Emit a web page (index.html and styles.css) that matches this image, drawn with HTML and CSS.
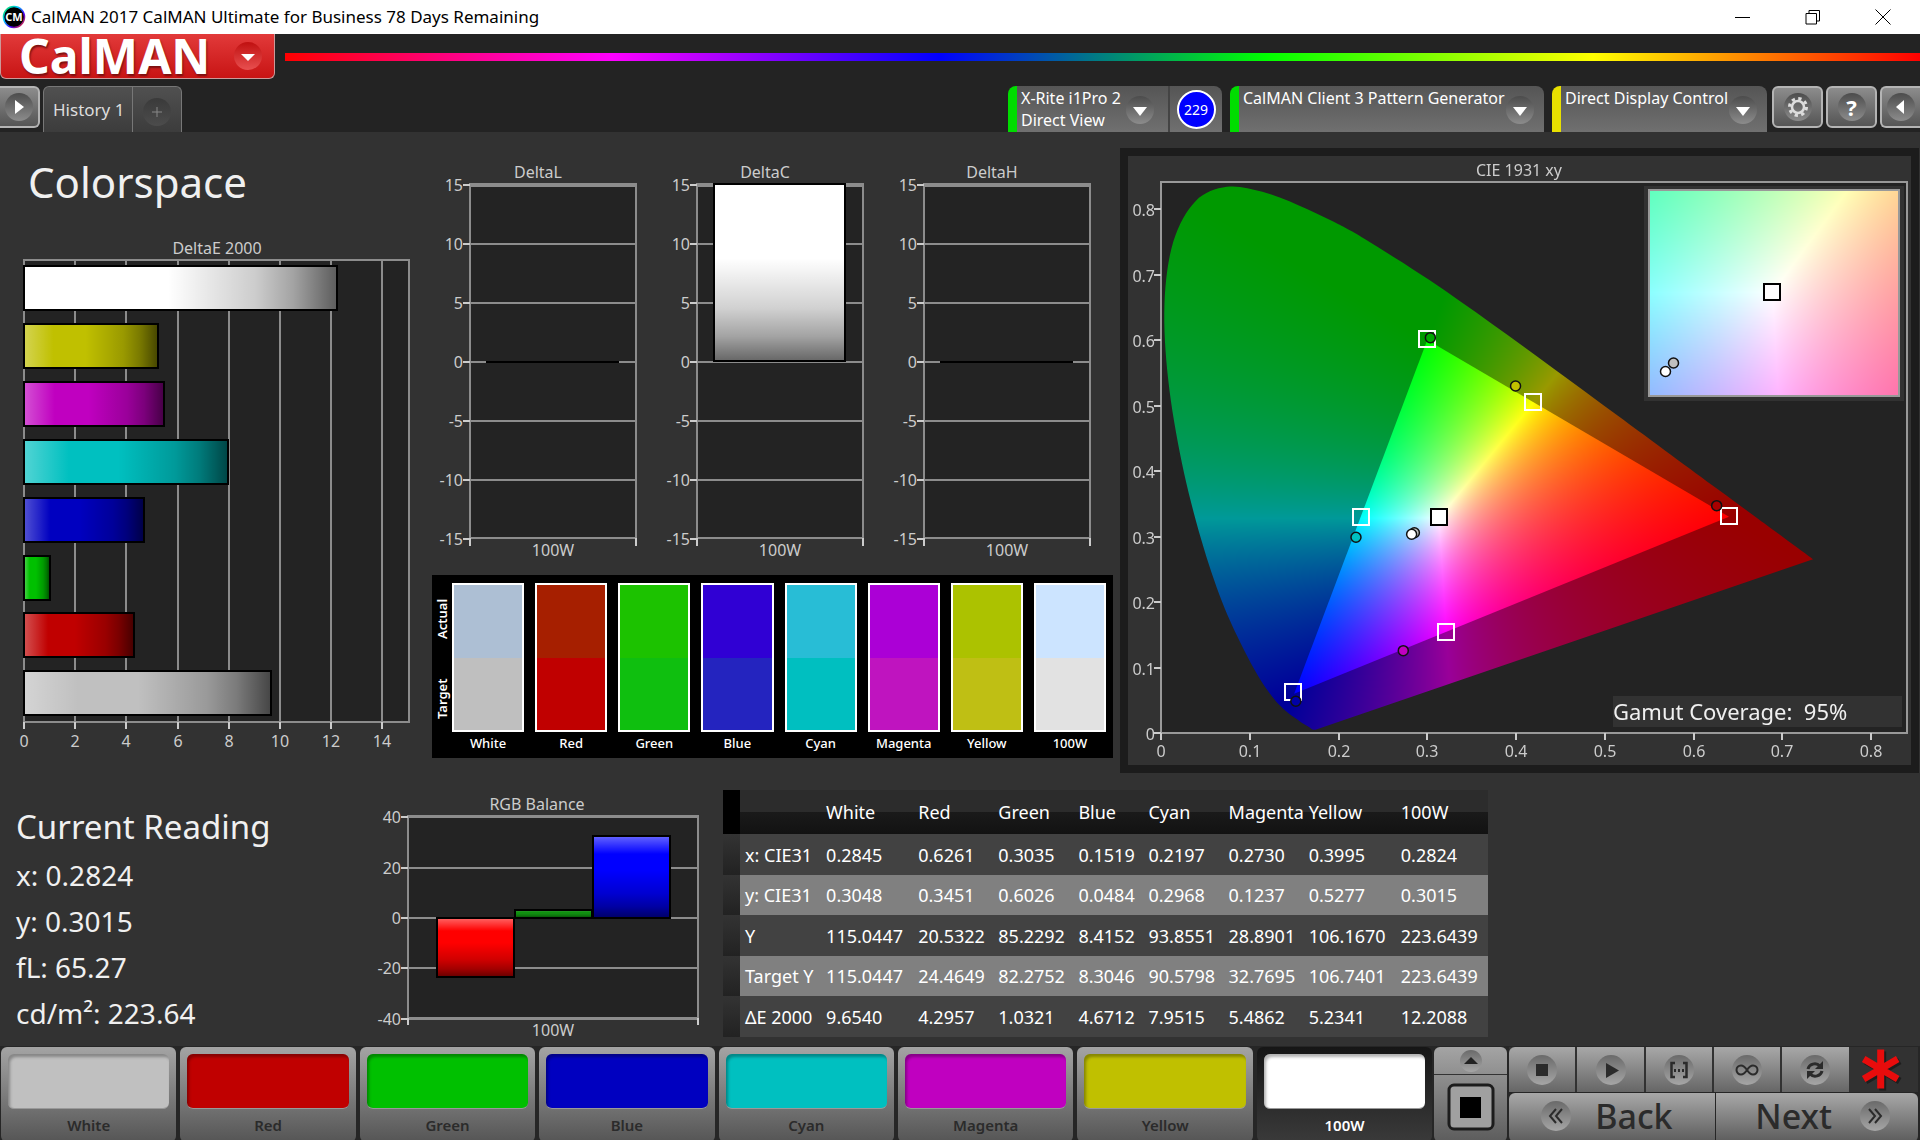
FILE: index.html
```html
<!DOCTYPE html>
<html lang="en">
<head>
<meta charset="utf-8">
<title>CalMAN 2017 CalMAN Ultimate for Business</title>
<link rel="stylesheet" href="styles.css">
</head>
<body>
<div class="titlebar">
  <svg class="app-icon" viewBox="0 0 24 24" width="24" height="24" aria-hidden="true">
    <defs><linearGradient id="rim" x1="0" y1="0" x2="1" y2="1"><stop offset="0" stop-color="#0d4"/><stop offset=".35" stop-color="#0cf"/><stop offset=".65" stop-color="#40f"/><stop offset="1" stop-color="#f30"/></linearGradient></defs>
    <circle cx="12" cy="12" r="10.5" fill="#000" stroke="url(#rim)" stroke-width="1.5"/>
    <text x="12" y="16" class="icon-text">CM</text>
  </svg>
  <span class="title">CalMAN 2017 CalMAN Ultimate for Business 78 Days Remaining</span>
  <button class="win" aria-label="Minimize"><svg viewBox="0 0 16 16" width="16" height="16"><path d="M0 8.5h15"/></svg></button>
  <button class="win" aria-label="Restore"><svg viewBox="0 0 16 16" width="16" height="16"><path d="M1 4.5h10.500v10.500H1zM4 4V1.500h10.500V12H12"/></svg></button>
  <button class="win" aria-label="Close"><svg viewBox="0 0 16 16" width="16" height="16"><path d="M.5.5l15 15M15.500.5l-15 15"/></svg></button>
</div>

<header class="header">
  <div class="brand-row">
    <button class="brand">CalMAN<span class="knob knob-red"><svg viewBox="0 0 28 28" width="28" height="28"><path d="M7 12h14l-7 7z" fill="#fff"/></svg></span></button>
    <div class="rainbow"></div>
  </div>
  <div class="tab-row">
    <button class="square edge-left" aria-label="Show workflow"><span class="knob"><svg viewBox="0 0 28 28" width="28" height="28"><path d="M10 7l9 7-9 7z" fill="#fff"/></svg></span></button>
    <div class="tabs">
      <button class="tab">History 1</button>
      <button class="tab tab-add" aria-label="Add tab"><span class="knob knob-dark"><svg viewBox="0 0 28 28" width="28" height="28"><path d="M14 9v10M9 14h10" stroke="#888" fill="none"/></svg></span></button>
    </div>
    <div class="spring"></div>
    <div class="device meter">
      <button class="device-main"><span>X-Rite i1Pro 2<br>Direct View</span><span class="knob"><svg viewBox="0 0 28 28" width="28" height="28"><path d="M7 11h14l-7 9z" fill="#fff"/></svg></span></button>
      <div class="badge-cell"><span class="badge">229</span></div>
    </div>
    <div class="device source">
      <button class="device-main"><span>CalMAN Client 3 Pattern Generator</span><span class="knob"><svg viewBox="0 0 28 28" width="28" height="28"><path d="M7 11h14l-7 9z" fill="#fff"/></svg></span></button>
    </div>
    <div class="device display">
      <button class="device-main"><span>Direct Display Control</span><span class="knob"><svg viewBox="0 0 28 28" width="28" height="28"><path d="M7 11h14l-7 9z" fill="#fff"/></svg></span></button>
    </div>
    <button class="square" aria-label="Settings"><span class="knob"><svg viewBox="0 0 28 28" width="28" height="28"><circle cx="14" cy="14" r="6" fill="none" stroke="#ddd" stroke-width="2.500"/><circle cx="14" cy="14" r="8.500" fill="none" stroke="#ddd" stroke-width="3" stroke-dasharray="3.300 3.376"/></svg></span></button>
    <button class="square" aria-label="Help"><span class="knob knob-help">?</span></button>
    <button class="square edge-right" aria-label="Show panel"><span class="knob"><svg viewBox="0 0 28 28" width="28" height="28"><path d="M17 7l-8 7 8 7z" fill="#fff"/></svg></span></button>
  </div>
</header>

<main class="main">
  <div class="top">
    <section class="de">
      <h1>Colorspace</h1>
      <svg id="deltaE" class="chart" viewBox="0 232 432 526"></svg>
    </section>
    <section class="middle">
      <div class="deltas">
        <svg id="deltaL" class="chart" viewBox="432 158 227 404"></svg>
        <svg id="deltaC" class="chart" viewBox="432 158 227 404"></svg>
        <svg id="deltaH" class="chart" viewBox="432 158 227 404"></svg>
      </div>
      <div class="compare">
        <div class="sides"><span>Actual</span><span>Target</span></div>
        <div class="swatches" id="swatches"></div>
      </div>
    </section>
    <section class="cie">
      <canvas id="gamut" width="783" height="609"></canvas>
      <svg id="cieAxes" class="overlay" viewBox="1128 156 783 609"></svg>
    </section>
  </div>
  <div class="bottom">
    <section class="reading">
      <h2>Current Reading</h2>
      <p>x: 0.2824</p>
      <p>y: 0.3015</p>
      <p>fL: 65.27</p>
      <p>cd/m²: 223.64</p>
    </section>
    <section class="balance"><svg id="rgb" class="chart" viewBox="370 785 353 256"></svg></section>
    <section class="data">
      <table>
        <colgroup><col class="c-grip"><col class="c-label"><col class="c-wide"><col class="c-mid"><col class="c-mid"><col class="c-thin"><col class="c-mid"><col class="c-mid"><col class="c-wide"><col class="c-wide"></colgroup>
        <thead><tr><td class="grip"></td><td></td><th>White</th><th>Red</th><th>Green</th><th>Blue</th><th>Cyan</th><th>Magenta</th><th>Yellow</th><th>100W</th></tr></thead>
        <tbody>
          <tr><td class="grip"></td><th>x: CIE31</th><td>0.2845</td><td>0.6261</td><td>0.3035</td><td>0.1519</td><td>0.2197</td><td>0.2730</td><td>0.3995</td><td>0.2824</td></tr>
          <tr><td class="grip"></td><th>y: CIE31</th><td>0.3048</td><td>0.3451</td><td>0.6026</td><td>0.0484</td><td>0.2968</td><td>0.1237</td><td>0.5277</td><td>0.3015</td></tr>
          <tr><td class="grip"></td><th>Y</th><td>115.0447</td><td>20.5322</td><td>85.2292</td><td>8.4152</td><td>93.8551</td><td>28.8901</td><td>106.1670</td><td>223.6439</td></tr>
          <tr><td class="grip"></td><th>Target Y</th><td>115.0447</td><td>24.4649</td><td>82.2752</td><td>8.3046</td><td>90.5798</td><td>32.7695</td><td>106.7401</td><td>223.6439</td></tr>
          <tr><td class="grip"></td><th>ΔE 2000</th><td>9.6540</td><td>4.2957</td><td>1.0321</td><td>4.6712</td><td>7.9515</td><td>5.4862</td><td>5.2341</td><td>12.2088</td></tr>
        </tbody>
      </table>
    </section>
  </div>
</main>

<footer class="footer">
  <div class="patches">
    <button class="patch"><span class="chip chip-white"></span>White</button>
    <button class="patch"><span class="chip chip-red"></span>Red</button>
    <button class="patch"><span class="chip chip-green"></span>Green</button>
    <button class="patch"><span class="chip chip-blue"></span>Blue</button>
    <button class="patch"><span class="chip chip-cyan"></span>Cyan</button>
    <button class="patch"><span class="chip chip-magenta"></span>Magenta</button>
    <button class="patch"><span class="chip chip-yellow"></span>Yellow</button>
    <button class="patch selected"><span class="chip chip-full"></span>100W</button>
  </div>
  <div class="window-ctl">
    <button class="up" aria-label="Expand"><svg viewBox="0 0 24 24" width="24" height="24"><circle cx="12" cy="12" r="11" fill="url(#knobUp)"/><path d="M5 15h14l-7-7z" fill="#222"/></svg></button>
    <button class="size" aria-label="Pattern window"><svg viewBox="0 0 48 48" width="48" height="48"><rect x="2" y="2" width="44" height="44" rx="5" fill="#a0a0a0" stroke="#1c1c1c" stroke-width="3"/><rect x="13" y="14" width="21" height="21" fill="#000"/></svg></button>
  </div>
  <div class="transport">
    <div class="keys">
      <button class="key" aria-label="Stop"><svg viewBox="0 0 32 32" width="32" height="32"><circle cx="16" cy="16" r="15" fill="url(#knobUp)"/><path d="M10 10h12v12H10z" fill="#2b2b2b"/></svg></button>
      <button class="key" aria-label="Read"><svg viewBox="0 0 32 32" width="32" height="32"><circle cx="16" cy="16" r="15" fill="url(#knobUp)"/><path d="M11 9l13 7.500-13 7.500z" fill="#2b2b2b"/></svg></button>
      <button class="key" aria-label="Read series"><svg viewBox="0 0 32 32" width="32" height="32"><circle cx="16" cy="16" r="15" fill="url(#knobUp)"/><path d="M12 9H8.500v14H12M20 9h3.500v14H20" fill="none" stroke="#2b2b2b" stroke-width="2.500"/><path d="M11 15h2v3h-2zM15 15h2v3h-2zM19 15h2v3h-2z" fill="#2b2b2b"/></svg></button>
      <button class="key" aria-label="Read continuously"><svg viewBox="0 0 32 32" width="32" height="32"><circle cx="16" cy="16" r="15" fill="url(#knobUp)"/><path d="M16 16c-2-3-4-4.500-6-4.500a4.500 4.500 0 000 9c2 0 4-1.500 6-4.500s4-4.500 6-4.500a4.500 4.500 0 010 9c-2 0-4-1.500-6-4.500z" fill="none" stroke="#2b2b2b" stroke-width="2"/></svg></button>
      <button class="key" aria-label="Refresh"><svg viewBox="0 0 32 32" width="32" height="32"><circle cx="16" cy="16" r="15" fill="url(#knobUp)"/><path d="M9 15c1-5 8-7 12-3M23 17c-1 5-8 7-12 3" fill="none" stroke="#2b2b2b" stroke-width="3"/><path d="M24 7v8h-8zM8 25v-8h8z" fill="#2b2b2b"/></svg></button>
      <svg class="star" viewBox="0 0 44 44" width="44" height="44" aria-hidden="true"><path d="M22 2.500v39M5 12l34 20M39 12L5 32" stroke="#111" stroke-width="7" transform="translate(2 2)" opacity=".6"/><path d="M22 2.500v39M5 12l34 20M39 12L5 32" stroke="#e80c0c" stroke-width="7"/></svg>
    </div>
    <div class="nav">
      <button class="go back"><svg viewBox="0 0 32 32" width="32" height="32"><circle cx="16" cy="16" r="15" fill="url(#knobUp)"/><path d="M16 9l-6 7 6 7M22 9l-6 7 6 7" fill="none" stroke="#2b2b2b" stroke-width="2"/></svg>Back</button>
      <button class="go next">Next<svg viewBox="0 0 32 32" width="32" height="32"><circle cx="16" cy="16" r="15" fill="url(#knobUp)"/><path d="M10 9l6 7-6 7M16 9l6 7-6 7" fill="none" stroke="#2b2b2b" stroke-width="2"/></svg></button>
    </div>
  </div>
</footer>

<svg class="defs" width="0" height="0" aria-hidden="true">
  <defs>
    <linearGradient id="knobUp" x1="0" y1="0" x2="0" y2="1"><stop offset="0" stop-color="#6a6a6a"/><stop offset="1" stop-color="#a6a6a6"/></linearGradient>
    <linearGradient id="shadeX"><stop offset="0" stop-color="#fff" stop-opacity=".32"/><stop offset=".22" stop-color="#fff" stop-opacity="0"/><stop offset=".46" stop-color="#000" stop-opacity="0"/><stop offset=".74" stop-color="#000" stop-opacity=".2"/><stop offset=".86" stop-color="#000" stop-opacity=".36"/><stop offset="1" stop-color="#000" stop-opacity=".64"/></linearGradient>
    <linearGradient id="shadeY" x1="0" y1="0" x2="0" y2="1"><stop offset="0" stop-color="#fff" stop-opacity=".4"/><stop offset=".22" stop-color="#fff" stop-opacity="0"/><stop offset=".42" stop-color="#000" stop-opacity="0"/><stop offset=".7" stop-color="#000" stop-opacity=".18"/><stop offset=".86" stop-color="#000" stop-opacity=".36"/><stop offset="1" stop-color="#000" stop-opacity=".6"/></linearGradient>
  </defs>
</svg>
<script src="charts.js"></script>
</body>
</html>
```
FILE: styles.css
```css
* { box-sizing: border-box; }
body {
  margin: 0;
  min-height: 100vh;
  display: flex;
  flex-direction: column;
  background: #232323;
  color: #f0f0f0;
  font-family: "Noto Sans", "Open Sans", sans-serif;
  font-size: 16px;
  overflow-x: hidden;
}
button { font: inherit; color: inherit; border: 0; padding: 0; margin: 0; background: none; }
svg { display: block; }
.defs { position: absolute; }

.titlebar { display: flex; align-items: center; height: 34px; background: #fff; color: #000; padding: 0 2px; }
.titlebar .title { flex: 1; padding-left: 5px; font-size: 17px; line-height: 32px; }
.icon-text { font: 700 11px "Noto Sans", sans-serif; fill: #fff; text-anchor: middle; }
.win { width: 70px; height: 32px; display: flex; align-items: center; justify-content: center; }
.win svg { fill: none; stroke: #000; stroke-width: 1; }

.header { background: #232323; }
.brand-row { display: flex; align-items: center; height: 52px; padding-bottom: 7px; }
.brand {
  width: 275px; height: 45px; display: flex; align-items: center; justify-content: space-between;
  padding: 0 12px 0 18px; border: 1px solid #c99; border-top: 0; border-radius: 0 0 6px 6px;
  background: linear-gradient(#e23a3a, #c81414); color: #fff; font-size: 48px; font-weight: 700; line-height: 40px;
  text-shadow: 1px 2px 2px #7a1010;
}
.rainbow { flex: 1; margin-left: 10px; height: 8px; background: linear-gradient(90deg, #f00, #f0f 20%, #00f 40%, #0f0 60%, #ff0 80%, #f00); }
.knob { flex: none; width: 28px; height: 28px; border-radius: 50%; background: linear-gradient(#4c4c4c, #8c8c8c); display: block; }
.knob-red { background: linear-gradient(#c01010, #e85050); }
.knob-dark { background: linear-gradient(#3a3a3a, #4c4c4c); }
.knob-help { color: #fff; font-weight: 700; font-size: 22px; line-height: 28px; text-align: center; }

.tab-row { display: flex; height: 46px; }
.square {
  width: 51px; height: 42px; margin-left: 3px; display: flex; align-items: center; justify-content: center;
  border: 2px solid #b4b4b4; border-radius: 6px; background: linear-gradient(#8c8c8c, #555);
}
.edge-left { width: 40px; margin-left: 0; border-left: 0; border-radius: 0 6px 6px 0; }
.edge-right { width: 40px; border-right: 0; border-radius: 6px 0 0 6px; }
.tabs { display: flex; margin-left: 3px; border: 1px solid #777; border-bottom: 0; border-radius: 6px 6px 0 0; background: linear-gradient(#505050, #3c3c3c); color: #ddd; }
.tab { padding: 0 8px 0 9px; font-size: 17px; }
.tab-add { width: 49px; border-left: 1px solid #777; padding: 4px 10px 0; }
.spring { flex: 1; }
.device { display: flex; margin-right: 8px; border-radius: 8px 8px 0 0; overflow: hidden; border-left: 9px solid #0d0; background: linear-gradient(#555, #707070); color: #fff; }
.device-main { flex: 1; display: flex; justify-content: space-between; align-items: flex-start; text-align: left; line-height: 22px; padding: 1px 10px 0 4px; white-space: nowrap; }
.device-main .knob { margin-top: 9px; }
.meter { width: 214px; }
.meter .device-main { padding-right: 14px; }
.source { width: 314px; }
.display { width: 215px; border-left-color: #e8e000; margin-right: 2px; }
.badge-cell { width: 54px; border-left: 2px solid #444; display: flex; align-items: center; justify-content: center; }
.badge { width: 39px; height: 39px; border: 2px solid #fff; border-radius: 50%; background: #00f; font-size: 14px; line-height: 35px; text-align: center; }

.main { flex: 1; background: #323232; }
.top { display: grid; grid-template-columns: 432fr 681fr 807fr; }
.de { padding-top: 26px; }
h1 { margin: 0 0 26px 28px; font-size: 42px; line-height: 48px; font-weight: 400; }
.chart { width: 100%; height: auto; }
.middle { padding-top: 26px; }
.deltas { display: grid; grid-template-columns: repeat(3, 1fr); }
.compare { margin-top: 13px; height: 183px; background: #000; display: flex; padding: 8px 7px 0 0; font-size: 13px; font-weight: 500; color: #fff; }
.sides { width: 20px; height: 160px; margin-top: -4px; display: flex; flex-direction: column; font-weight: 600; }
.sides span { flex: 1; width: 20px; line-height: 20px; writing-mode: vertical-rl; transform: rotate(180deg); text-align: center; }
.swatches { flex: 1; display: grid; grid-template-columns: repeat(8, 1fr); column-gap: 11px; }
.pair { text-align: center; line-height: 22px; }
.pair-box { height: 149px; border: 2px solid #fff; display: grid; grid-template-rows: 1fr 1fr; }

.cie { position: relative; margin: 16px 1px 0 7px; border: 8px solid #1c1c1c; }
.cie canvas { display: block; width: 100%; height: auto; }
.overlay { position: absolute; inset: 0; width: 100%; height: 100%; }

.axis { font: 16px "Noto Sans", sans-serif; fill: #ccc; }
.mid { text-anchor: middle; }
.end { text-anchor: end; }
.coverage { font: 22px "Noto Sans", sans-serif; fill: #f0f0f0; white-space: pre; }

.bottom { display: grid; grid-template-columns: 370fr 353fr 765fr 432fr; }
.reading { padding: 34px 0 0 16px; font-size: 28px; line-height: 46px; white-space: nowrap; }
.reading h2 { margin: 0 0 5px; font-size: 33px; line-height: 40px; font-weight: 400; }
.reading p { margin: 0; }
.balance { padding-top: 12px; }
.data { padding-top: 17px; }
table { width: 100%; table-layout: fixed; border-collapse: collapse; font-size: 18px; color: #fff; }
th, td { padding: 0 0 0 5px; height: 41px; font-weight: 400; text-align: left; white-space: nowrap; }
thead th, thead td { height: 44px; }
thead { background: linear-gradient(#2c2c2c 50%, #1a1a1a 50%, #121212); }
tbody tr { background: #424242; }
tbody tr:nth-child(even) { background: #808080; }
tbody tr:nth-child(even) > * { height: 40px; }
.grip { background: linear-gradient(#333, #222); }
thead .grip { background: #000; }
.c-grip { width: 17px; }
.c-label { width: 81px; }
.c-mid { width: 80px; }
.c-wide { width: 92px; }
.c-thin { width: 70px; }

.footer { display: grid; grid-template-columns: 1432fr 73fr 409fr; column-gap: 2px; height: 94px; padding: 1px 2px 2px 1px; background: #262626; color: #2b2b2b; }
.patches { display: grid; grid-template-columns: repeat(8, 1fr); column-gap: 4px; }
.patch { display: flex; flex-direction: column; align-items: center; padding: 7px 7px 0; border-radius: 6px; background: linear-gradient(#a4a4a4, #555); font-size: 15px; font-weight: 600; line-height: 33px; }
.chip { width: 100%; height: 55px; border-radius: 6px; box-shadow: inset 2px 3px 3px rgba(0, 0, 0, .3); border-bottom: 1px solid #999; }
.chip-white { background: #c0c0c0; }
.chip-red { background: #c00000; }
.chip-green { background: #00c000; }
.chip-blue { background: #0000c0; }
.chip-cyan { background: #00c0c0; }
.chip-magenta { background: #c000c0; }
.chip-yellow { background: #c0c000; }
.chip-full { background: #fff; }
.selected { background: linear-gradient(#161616, #3a3a3a); color: #fff; }
.window-ctl { display: flex; flex-direction: column; border-radius: 6px; background: linear-gradient(#a4a4a4, #5c5c5c); }
.up { height: 28px; border-bottom: 1px solid #333; display: flex; justify-content: center; align-items: center; }
.size { flex: 1; display: flex; justify-content: center; align-items: center; padding-bottom: 4px; }
.transport { display: flex; flex-direction: column; gap: 1px; }
.keys { display: flex; height: 45px; gap: 2px; background: #323232; }
.key { flex: 67; display: flex; align-items: center; justify-content: center; background: linear-gradient(#a8a8a8, #666); }
.key:first-child { border-radius: 6px 0 0 0; }
.star { flex: 60; margin-right: 8px; }
.nav { display: flex; flex: 1; gap: 1px; border-radius: 6px; overflow: hidden; }
.go { flex: 1; display: flex; align-items: center; background: linear-gradient(#a8a8a8, #5c5c5c); font-size: 34px; font-weight: 500; line-height: 40px; padding-bottom: 4px; }
.back { padding-left: 31px; gap: 23px; }
.next { justify-content: flex-end; padding-right: 27px; gap: 27px; }
```
FILE: charts.js
```js
const NS = 'http://www.w3.org/2000/svg';
const byId = id => document.getElementById(id);

function el(parent, name, attrs, text) {
  const node = document.createElementNS(NS, name);
  for (const key in attrs) node.setAttribute(key, attrs[key]);
  if (text !== undefined) node.textContent = text;
  parent.appendChild(node);
  return node;
}
function rect(svg, x, y, w, h, fill, extra) {
  return el(svg, 'rect', Object.assign({ x, y, width: w, height: h, fill }, extra));
}
function label(svg, x, y, text, anchor) {
  el(svg, 'text', { x, y, class: 'axis ' + anchor }, text);
}
function bar(svg, x, y, w, h, color, shade) {
  rect(svg, x, y, w, h, color);
  rect(svg, x, y, w, h, `url(#${shade})`, { stroke: '#000', 'stroke-width': 2 });
}

// DeltaE 2000: horizontal bars
(function () {
  const svg = byId('deltaE');
  const unit = 25.6;
  label(svg, 217, 254, 'DeltaE 2000', 'mid');
  rect(svg, 24, 260, 385, 462, '#232323', { stroke: '#8c8c8c', 'stroke-width': 2 });
  for (let v = 0; v <= 14; v += 2) {
    const x = Math.round(24 + v * unit);
    if (v) rect(svg, x - 1, 260, 2, 462, '#8c8c8c');
    rect(svg, x - 1, 722, 2, 7, '#ccc');
    label(svg, x, 747, v, 'mid');
  }
  const rows = [[12.2088, '#fff'], [5.2341, '#c0c000'], [5.4862, '#c000c0'], [7.9515, '#00c0c0'],
    [4.6712, '#0000c0'], [1.0321, '#00c000'], [4.2957, '#c00000'], [9.6540, '#c0c0c0']];
  rows.forEach(([v, color], i) => bar(svg, 24, Math.round(266 + i * 57.9), Math.round(v * unit), 44, color, 'shadeX'));
})();

// DeltaL, DeltaC, DeltaH: one column each
function delta(id, title, value) {
  const svg = byId(id);
  label(svg, 538, 178, title, 'mid');
  rect(svg, 470, 184, 166, 354, '#232323', { stroke: '#8c8c8c', 'stroke-width': 2 });
  rect(svg, 469, 183, 168, 4, '#8c8c8c');
  for (let v = 15; v >= -15; v -= 5) {
    const y = Math.round(361 - v * 11.8);
    if (Math.abs(v) < 15) rect(svg, 470, y, 166, 2, '#8c8c8c');
    rect(svg, 463, y, 7, 2, '#ccc');
    label(svg, 463, y + 7, v, 'end');
  }
  rect(svg, 469, 538, 2, 8, '#ccc');
  rect(svg, 635, 538, 2, 8, '#ccc');
  label(svg, 553, 556, '100W', 'mid');
  if (value) bar(svg, 487, 184, 131, 177, '#fff', 'shadeY');
  else rect(svg, 486, 361, 133, 2, '#000');
}
delta('deltaL', 'DeltaL', 0);
delta('deltaC', 'DeltaC', 15);
delta('deltaH', 'DeltaH', 0);

// RGB balance
(function () {
  const svg = byId('rgb');
  label(svg, 537, 810, 'RGB Balance', 'mid');
  rect(svg, 408, 816, 290, 202, '#232323', { stroke: '#8c8c8c', 'stroke-width': 2 });
  for (let v = 40; v >= -40; v -= 20) {
    const y = Math.round(917 - v * 2.52);
    rect(svg, 408, y, 290, 2, '#8c8c8c');
    rect(svg, 401, y, 7, 2, '#ccc');
    label(svg, 401, y + 7, v, 'end');
  }
  rect(svg, 407, 1018, 2, 7, '#ccc');
  rect(svg, 697, 1018, 2, 7, '#ccc');
  label(svg, 553, 1036, '100W', 'mid');
  bar(svg, 437, 918, 77, 59, '#f00', 'shadeY');
  bar(svg, 515, 910, 77, 8, '#109010', 'shadeY');
  bar(svg, 593, 836, 77, 82, '#00f', 'shadeY');
})();

// Actual and target swatches
[['White', '#adbfd4', '#bfbfbf'], ['Red', '#a61f00', '#c00000'], ['Green', '#1cc200', '#0fbf0f'],
  ['Blue', '#3000d4', '#2424bf'], ['Cyan', '#28bdd6', '#00bfc0'], ['Magenta', '#ab00d6', '#bf14bf'],
  ['Yellow', '#acc200', '#bfbf14'], ['100W', '#cce4ff', '#e2e2e2']].forEach(([name, actual, target]) => {
  const pair = document.createElement('div');
  pair.className = 'pair';
  pair.innerHTML = `<div class="pair-box"><div style="background:${actual}"></div><div style="background:${target}"></div></div>${name}`;
  byId('swatches').appendChild(pair);
});

// CIE 1931 chromaticity diagram
const X0 = 1161, Y0 = 733, SX = 887.5, SY = 655;
const px = x => X0 + x * SX, py = y => Y0 - y * SY;

function chroma(x, y) {
  const X = x / y, Z = (1 - x - y) / y;
  const rgb = [3.2406 * X - 1.5372 - 0.4986 * Z, -0.9689 * X + 1.8758 + 0.0415 * Z, 0.0557 * X - 0.204 + 1.057 * Z]
    .map(c => Math.max(0, c));
  const top = Math.max(...rgb) || 1;
  return rgb.map(c => c / top);
}
function field(w, h, toXY, level) {
  const c = document.createElement('canvas');
  c.width = w; c.height = h;
  const ctx = c.getContext('2d');
  const img = ctx.createImageData(w, h);
  for (let j = 0; j < h; j++) for (let i = 0; i < w; i++) {
    const [x, y] = toXY(i, j);
    const rgb = chroma(x, Math.max(y, 0.001));
    const k = (j * w + i) * 4;
    for (let n = 0; n < 3; n++) img.data[k + n] = rgb[n] * 255 * level;
    img.data[k + 3] = 255;
  }
  ctx.putImageData(img, 0, 0);
  return c;
}
(function () {
  const locus = [[.1741, .005], [.1714, .0051], [.1689, .0069], [.1644, .0109], [.1566, .0177], [.144, .0297], [.1355, .0399],
    [.1241, .0578], [.1096, .0868], [.0913, .1327], [.0687, .2007], [.0454, .295], [.0235, .4127], [.0082, .5384], [.0039, .6548],
    [.0139, .7502], [.0389, .812], [.0743, .8338], [.1142, .8262], [.1547, .8059], [.1929, .7816], [.2296, .7543], [.3016, .6923],
    [.3731, .6245], [.4441, .5547], [.5125, .4866], [.5752, .4242], [.627, .3725], [.6658, .334], [.6915, .3083], [.719, .2809], [.7347, .2653]];
  const ctx = byId('gamut').getContext('2d');
  ctx.fillStyle = '#323232';
  ctx.fillRect(0, 0, 783, 609);
  ctx.translate(-1128, -156);
  ctx.fillStyle = '#232323';
  ctx.fillRect(1162, 182, 745, 551);
  const main = level => field(745, 551, (i, j) => [(1162 + i - X0) / SX, (Y0 - 182 - j) / SY], level);
  const p = locus.map(([x, y]) => [px(x), py(y)]);

  ctx.save();
  ctx.beginPath();
  ctx.moveTo(...p[0]);
  for (let i = 0; i < p.length - 1; i++) {
    const a = p[Math.max(i - 1, 0)], b = p[i], c = p[i + 1], d = p[Math.min(i + 2, p.length - 1)];
    ctx.bezierCurveTo(b[0] + (c[0] - a[0]) / 6, b[1] + (c[1] - a[1]) / 6, c[0] - (d[0] - b[0]) / 6, c[1] - (d[1] - b[1]) / 6, c[0], c[1]);
  }
  ctx.closePath();
  ctx.clip();
  ctx.drawImage(main(0.6), 1162, 182);
  ctx.restore();

  ctx.save();
  ctx.beginPath();
  [[.64, .33], [.3, .6], [.15, .06]].forEach(([x, y]) => ctx.lineTo(px(x), py(y)));
  ctx.closePath();
  ctx.clip();
  ctx.drawImage(main(1), 1162, 182);
  ctx.restore();

  ctx.fillStyle = '#323232';
  ctx.fillRect(1644, 186, 260, 215);
  ctx.fillRect(1613, 696, 289, 31);
  ctx.fillStyle = '#999';
  ctx.fillRect(1648, 189, 252, 208);
  ctx.drawImage(field(248, 204, (i, j) => [.3127 + (1650 + i - 1772) / 3515, .329 - (191 + j - 292) / 2890], 1), 1650, 191);

  const svg = byId('cieAxes');
  label(svg, 1519, 176, 'CIE 1931 xy', 'mid');
  rect(svg, 1161, 182, 746, 551, 'none', { stroke: '#999', 'stroke-width': 2 });
  for (let v = 0; v <= 8; v++) {
    const x = Math.round(px(v / 10)), y = Math.round(py(v / 10));
    rect(svg, x - 1, 733, 2, 7, '#ccc');
    rect(svg, 1154, y - 1, 7, 2, '#ccc');
    label(svg, x, 757, v ? v / 10 : 0, 'mid');
    label(svg, 1155, y + 7, v ? v / 10 : 0, 'end');
  }
  el(svg, 'text', { x: 1613, y: 720, class: 'coverage' }, 'Gamut Coverage:  95%');
  const box = (x, y, color, fill) => rect(svg, x - 8, y - 8, 16, 16, fill || 'none', { stroke: color, 'stroke-width': 2 });
  const dot = (x, y, fill) => el(svg, 'circle', { cx: x, cy: y, r: 5, fill, stroke: '#111', 'stroke-width': 1.5 });
  [[.64, .332], [.3, .602], [.149, .063], [.225, .33], [.3209, .1542], [.4193, .5053]].forEach(([x, y]) => box(Math.round(px(x)), Math.round(py(y)), '#fff'));
  box(1439, 517, '#000', '#fff');
  [[.2855, .3058, '#c0c0c0'], [.6261, .3471, '#a80000'], [.3035, .6036, '#00a800'], [.1519, .0484, '#0000a8'], [.2197, .2988, '#00c0c0'],
    [.273, .1257, '#c000c0'], [.3995, .5297, '#c0c000'], [.2824, .3035, '#fff']].forEach(([x, y, fill]) => dot(px(x), py(y), fill));
  box(1772, 292, '#000', '#fff');
  dot(1673.5, 363, '#c0c0c0');
  dot(1665.5, 371.5, '#fff');
})();
```
